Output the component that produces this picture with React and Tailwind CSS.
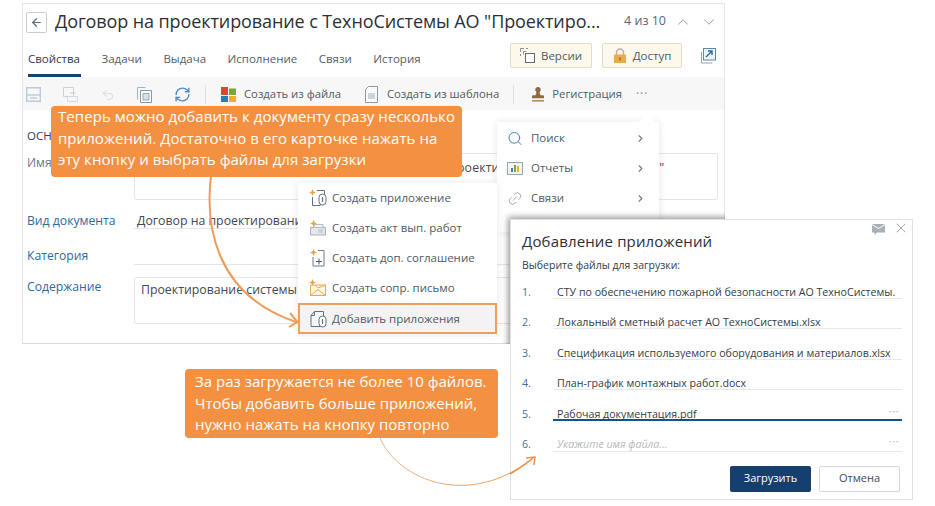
import React from 'react';
import { ArrowLeft, ChevronUp, ChevronDown, ChevronRight, X, Search, Link2, Undo2, RefreshCw } from 'lucide-react';

const Star = ({ x = 0, y = 0 }) => (
  <path d={`M${x + 3.5} ${y}l1 2.500 2.500 1-2.500 1-1 2.500-1-2.500-2.500-1 2.500-1z`} fill="#e8a33d" />
);

const Clip = ({ x = 0, y = 0 }) => (
  <>
    <rect x={x - 1} y={y} width="7" height="11" rx="3.500" fill="#fff" stroke="#5f7183" />
    <path d={`M${x + 2.5} ${y + 3}v5`} stroke="#5f7183" strokeWidth="1.200" />
  </>
);

const MenuIcon = ({ kind }) => (
  <svg width="18" height="18" viewBox="0 0 18 18" fill="none" className="shrink-0">
    {kind === 'app' && (
      <>
        <path d="M3.500 8v8.500h8" stroke="#5f7183" />
        <path d="M8 1.500h7.500v4" stroke="#5f7183" />
        <Clip x={11} y={5} />
        <Star x={0} y={0} />
      </>
    )}
    {kind === 'act' && (
      <>
        <path d="M1.500 8.500h15v7.500h-15z" fill="#e4e8ec" stroke="#a4afba" />
        <path d="M5 5.500h9v3H5z" fill="#f1f3f5" stroke="#b4bdc6" />
        <path d="M9 11h5M9 13h5" stroke="#b4bdc6" />
        <Star x={1} y={1} />
      </>
    )}
    {kind === 'add' && (
      <>
        <path d="M4 8v9h11V1.500H9" fill="#fff" stroke="#6d7f90" />
        <path d="M7 12.500h6M10 9.500v6" stroke="#475a6c" />
        <Star x={1} y={0} />
      </>
    )}
    {kind === 'mail' && (
      <>
        <path d="M1.500 6h15v10.500h-15z" fill="#fff6e3" stroke="#e0aa4e" />
        <path d="M1.500 16.500l7.500-6 7.500 6M6 6l3 3 7.500-3" stroke="#e0aa4e" />
        <Star x={0} y={0} />
      </>
    )}
    {kind === 'attach' && (
      <>
        <path d="M2 5.500L5.500 1.500H14.500V16.500H2z" fill="#f6f7f8" stroke="#5f7183" />
        <path d="M2 5.500h3.500v-4" stroke="#5f7183" />
        <Clip x={11} y={6} />
      </>
    )}
  </svg>
);

const WinIcon = () => (
  <svg width="15" height="15" viewBox="0 0 15 15" className="shrink-0">
    <rect x="0" y="0" width="7" height="8" fill="#d9482b" />
    <rect x="8" y="1.500" width="7" height="6.500" fill="#7aa63c" />
    <rect x="0" y="9" width="7" height="6" fill="#2d78c0" />
    <rect x="8" y="9" width="7" height="6" fill="#eeae2d" />
  </svg>
);

const DocIcon = () => (
  <svg width="13" height="17" viewBox="0 0 13 17" fill="none" className="shrink-0">
    <path d="M.5 3.500L3.500.5h9v16H.5z" fill="#fafafa" stroke="#8d99a5" />
    <path d="M3 8h7M3 10h7M3 12h7" stroke="#a2adb8" />
  </svg>
);

const Stamp = () => (
  <svg width="14" height="15" viewBox="0 0 14 15" className="shrink-0">
    <path d="M7 0a2.600 2.600 0 0 1 2 4.400c-.6 1-.4 2.600.6 3.800H12a1 1 0 0 1 1 1v2H1v-2a1 1 0 0 1 1-1h2.400c1-1.200 1.200-2.800.6-3.800A2.600 2.600 0 0 1 7 0z" fill="#8f6a3c" />
    <rect x="1" y="13" width="12" height="1.600" fill="#b08b58" />
  </svg>
);

const Tab = ({ children, active }) => (
  <div className={`relative h-[31px] pt-[4px] ${active ? 'text-[#2b3a48]' : 'text-[#525e69]'}`}>
    {children}
    {active && <div className="absolute left-0 -right-px bottom-0 h-[3px] bg-[#16446f]" />}
  </div>
);

const PopItem = ({ icon, children }) => (
  <div className="h-[30px] flex items-center gap-[8px] pl-[10px] pr-[13px] text-[#4f5a64]">
    <span className="w-[16px] flex justify-center">{icon}</span>
    <span className="flex-1">{children}</span>
    <ChevronRight size={11} strokeWidth={2.5} className="text-[#6f7b86]" />
  </div>
);

const files = [
  'СТУ по обеспечению пожарной безопасности АО ТехноСистемы.',
  'Локальный сметный расчет АО ТехноСистемы.xlsx',
  'Спецификация используемого оборудования и материалов.xlsx',
  'План-график монтажных работ.docx',
];

export default function App() {
  return (
    <div
      className="relative w-[935px] h-[506px] overflow-hidden bg-white text-[#333d46]"
      style={{ fontFamily: '"Open Sans", "Noto Sans", sans-serif' }}
    >
      {/* карточка документа */}
      <div className="absolute left-[22px] top-[3px] w-[703px] h-[341px] border border-[#e6e6e6] border-b-[#dcdcdc] bg-white">
        <div className="flex items-center h-[33px] mt-[2px] pl-[3px] pr-[6px]">
          <div className="w-[21px] h-[21px] shrink-0 border border-[#c9ced3] rounded-[2px] flex items-center justify-center text-[#5f6b76]">
            <ArrowLeft size={13} strokeWidth={2.2} />
          </div>
          <div className="ml-[8px] -mt-[3px] text-[18px] tracking-[-0.1px] leading-[26px] text-[#2b3036] whitespace-nowrap">
            Договор на проектирование с ТехноСистемы АО "Проектиро...
          </div>
          <div className="ml-auto flex items-center gap-[8px] whitespace-nowrap -mt-[2px]">
            <span className="text-[12.5px] text-[#5b6670]">4 из 10</span>
            <ChevronUp size={18} strokeWidth={1.1} className="text-[#7d8892]" />
            <ChevronDown size={18} strokeWidth={1.1} className="text-[#7d8892]" />
          </div>
        </div>

        <div className="flex items-start h-[38px] pl-[5px] pr-[8px] text-[11.5px]">
          <div className="flex gap-[21.5px] mt-[7px]">
            <Tab active>Свойства</Tab>
            <Tab>Задачи</Tab>
            <Tab>Выдача</Tab>
            <Tab>Исполнение</Tab>
            <Tab>Связи</Tab>
            <Tab>История</Tab>
          </div>
          <div className="ml-auto flex items-center gap-[10px] mt-[4px] text-[11.5px] text-[#4f5a64]">
            <div className="w-[82px] h-[25px] border border-[#e6dcc6] rounded-[2px] bg-[#fdf8ec] flex items-center justify-center gap-[6px]">
              <svg width="15" height="15" viewBox="0 0 15 15" fill="none">
                <path d="M.5 4V.5H4M6 .5h2M.5 6v2" stroke="#8a949d" />
                <path d="M3.500 3.500h3M3.500 3.500v3" stroke="#8a949d" />
                <rect x="5.500" y="5.500" width="9" height="9" fill="#fff" stroke="#5f6b76" />
              </svg>
              Версии
            </div>
            <div className="w-[80px] h-[25px] border border-[#e6dcc6] rounded-[2px] bg-[#fdf8ec] flex items-center justify-center gap-[6px]">
              <svg width="14" height="15" viewBox="0 0 14 15" fill="none">
                <path d="M3.500 7V4.500a3.500 3.500 0 0 1 7 0V7" stroke="#b9b1a0" strokeWidth="1.500" />
                <rect x="1" y="6.500" width="12" height="8.500" fill="#e9ad4d" />
                <rect x="6" y="9.500" width="2" height="3" fill="#a87a2a" />
              </svg>
              Доступ
            </div>
            <svg width="15" height="16" viewBox="0 0 15 16" fill="none" className="ml-[9px]">
              <rect x="2.500" y=".5" width="12" height="11.500" fill="#eef4fa" stroke="#5f86ad" />
              <path d="M.5 4v11h11" stroke="#8aa5bf" />
              <path d="M5 9l6-6M7 3h4v4" stroke="#2c6ba8" strokeWidth="1.400" />
            </svg>
          </div>
        </div>

        <div className="flex items-center h-[33px] pl-[3px] pt-[2px] bg-[#f7f7f7] text-[11.3px] text-[#4f5a64] whitespace-nowrap">
          <div className="flex items-center w-[190px] gap-[22px] opacity-90">
            <svg width="15" height="15" viewBox="0 0 15 15" fill="none" className="shrink-0">
              <path d="M.7.7h13.600v13.600H.7z" stroke="#b4c7d9" strokeWidth="1.400" />
              <path d="M1 8h13" stroke="#b4c7d9" strokeWidth="1.400" />
              <path d="M4 11h7" stroke="#c7d6e3" strokeWidth="2" />
            </svg>
            <svg width="16" height="15" viewBox="0 0 16 15" fill="none" className="shrink-0">
              <path d="M.5.5h10v9H.5z" stroke="#c1cfdc" />
              <path d="M4.500 9.500h10v5h-10z" stroke="#cfd9e2" />
              <path d="M7 6h6" stroke="#bcd6a5" />
            </svg>
            <Undo2 size={14} strokeWidth={1.500} className="text-[#ccd2d8] shrink-0" />
            <svg width="15" height="16" viewBox="0 0 15 16" fill="none" className="shrink-0">
              <path d="M.5 12.500V.5h8" stroke="#9aa8b5" />
              <path d="M3.500 3.500h11v12h-11z" fill="#fff" stroke="#7e8d9b" />
              <path d="M6 6.500h6v6.500H6z" fill="#d4dde5" stroke="#8fa0af" />
            </svg>
            <RefreshCw size={17} strokeWidth={2} className="text-[#3f82c0] shrink-0" />
          </div>
          <div className="w-px h-[19px] bg-[#e0e0e0] ml-[-11px] mr-[15px]" />
          <div className="flex items-center gap-[8px]">
            <WinIcon />
            <span>Создать из файла</span>
          </div>
          <div className="flex items-center gap-[9px] ml-[24px]">
            <DocIcon />
            <span>Создать из шаблона</span>
          </div>
          <div className="w-px h-[19px] bg-[#e0e0e0] ml-[14px] mr-[17px]" />
          <div className="flex items-center gap-[7px]">
            <Stamp />
            <span>Регистрация</span>
          </div>
          <span className="ml-[14px] -mt-[1px] text-[12px] tracking-[1px] text-[#7d8892]">···</span>
        </div>

        <div className="pl-[4px] pr-[6px] text-[12.3px]">
          <div className="mt-[17px] h-[16px] text-[11.5px] text-[#333d46]">ОСНОВНОЕ</div>
          <div className="flex mt-[10px]">
            <div className="w-[107px] pt-[1px] text-[12px] text-[#6b7680]">Имя</div>
            <div className="flex-1 h-[47px] border border-[#e4e7ea] rounded-[2px] px-[6px] pt-[5px] tracking-[0.13px] whitespace-nowrap overflow-hidden text-[#3f4953]">
              Договор на проектирование с ТехноСистемы АО "Проектирование систем АО Район"
            </div>
          </div>
          <div className="flex h-[22px] mt-[7px]">
            <div className="w-[107px] text-[12.2px] text-[#2d6a9f] pt-[5px]">Вид документа</div>
            <div className="flex-1 border-b border-[#e4e7ea] pl-[3px] pt-[5px] text-[#3f4953] whitespace-nowrap">Договор на проектирование</div>
          </div>
          <div className="flex h-[36px]">
            <div className="w-[107px] text-[12.2px] text-[#2d6a9f] pt-[18px]">Категория</div>
            <div className="flex-1 border-b border-[#e4e7ea]" />
          </div>
          <div className="flex mt-[12px]">
            <div className="w-[107px] text-[12.2px] text-[#2d6a9f] pt-[1px]">Содержание</div>
            <div className="flex-1 h-[47px] border border-[#e4e7ea] rounded-[2px] px-[6px] pt-[3px] text-[#3f4953]">
              Проектирование системы пожарной безопасности
            </div>
          </div>
        </div>
      </div>

      {/* меню "..." */}
      <div className="absolute left-[497px] top-[122px] w-[162px] h-[110px] bg-white shadow-[0_0_8px_rgba(0,0,0,0.1)] text-[11.5px] pt-[1px]">
        <div className="absolute left-[144px] -top-[6px] w-[12px] h-[12px] rotate-45 bg-white" />
        <PopItem icon={<Search size={17} strokeWidth={1.500} className="text-[#3f7fb5]" />}>Поиск</PopItem>
        <PopItem
          icon={
            <svg width="16" height="13" viewBox="0 0 16 13" fill="none">
              <rect x=".5" y=".5" width="15" height="12" fill="#f4f4f4" stroke="#9aa4ad" />
              <rect x="4" y="6" width="2" height="4" fill="#3f82c0" />
              <rect x="7" y="3" width="2" height="7" fill="#7aa63c" />
              <rect x="10" y="4" width="2" height="6" fill="#eeae2d" />
            </svg>
          }
        >
          Отчеты
        </PopItem>
        <PopItem icon={<Link2 size={19} strokeWidth={1.300} className="text-[#98a1a9] -rotate-45" />}>Связи</PopItem>
      </div>

      {/* подменю */}
      <div className="absolute left-[298px] top-[183px] w-[199px] bg-white shadow-[0_0_8px_rgba(0,0,0,0.1)] text-[11.5px] text-[#4f5a64]">
        {[
          ['app', 'Создать приложение'],
          ['act', 'Создать акт вып. работ'],
          ['add', 'Создать доп. соглашение'],
          ['mail', 'Создать сопр. письмо'],
        ].map(([kind, label]) => (
          <div key={kind} className="h-[30px] flex items-center gap-[5px] pl-[11px]">
            <MenuIcon kind={kind} />
            {label}
          </div>
        ))}
        <div className="h-[31px] flex items-center gap-[5px] pl-[9px] bg-[#f3f3f3] border-2 border-[#eda05c]">
          <MenuIcon kind="attach" />
          Добавить приложения
        </div>
      </div>

      {/* тень диалога видна только поверх карточки */}
      <div className="absolute left-[22px] top-[3px] w-[703px] h-[341px] overflow-hidden">
        <div className="absolute left-[488px] top-[216px] w-[403px] h-[281px] shadow-[-2px_-2px_6px_rgba(0,0,0,0.4)]" />
      </div>

      {/* диалог */}
      <div className="absolute left-[510px] top-[219px] w-[403px] h-[281px] bg-white border border-[#e0e0e0]">
        <div className="absolute right-[3px] top-0 flex items-center gap-[8px]">
          <svg width="13" height="11" viewBox="0 0 13 11" className="mt-[3px]">
            <path d="M0 0h13v8.500H5L2.500 11V8.500H0z" fill="#a9b0b6" />
            <path d="M0 .5l6.500 4 6.500-4" stroke="#fff" fill="none" />
          </svg>
          <X size={16} strokeWidth={1.100} className="text-[#7d8892]" />
        </div>
        <div className="pl-[11px] pt-[10px] text-[15px] leading-[22px] tracking-[0.15px] text-[#2b3036]">Добавление приложений</div>
        <div className="pl-[11px] mt-[6px] text-[10.5px] leading-[14px] text-[#333d46]">Выберите файлы для загрузки:</div>
        <div className="-mt-[4px] text-[10.65px]">
          {files.map((name, i) => (
            <div key={name} className="flex h-[30.6px] pl-[11px]">
              <span className="w-[31px] pt-[16.5px] leading-[14px] text-[#3b719f]">{i + 1}.</span>
              <div className="w-[349px] pl-[4px] pt-[16.5px] leading-[14px] border-b border-[#e8e8e8] whitespace-nowrap overflow-hidden">{name}</div>
            </div>
          ))}
          <div className="flex h-[30.6px] pl-[11px]">
            <span className="w-[31px] pt-[16.5px] leading-[14px] text-[#3b719f]">5.</span>
            <div className="w-[349px] pl-[4px] pt-[16.5px] leading-[14px] border-b-2 border-[#16528c] flex justify-between pr-[3px]">
              Рабочая документация.pdf
              <span className="text-[#a9b0b6] tracking-[0.5px] -mt-[3px]">···</span>
            </div>
          </div>
          <div className="flex h-[30.6px] pl-[11px]">
            <span className="w-[31px] pt-[16.5px] leading-[14px] text-[#3b719f]">6.</span>
            <div className="w-[349px] pl-[4px] pt-[16.5px] leading-[14px] border-b border-[#e8e8e8] flex justify-between pr-[3px]">
              <span className="italic text-[#b5b9bd]">Укажите имя файла...</span>
              <span className="text-[#a9b0b6] tracking-[0.5px] -mt-[3px]">···</span>
            </div>
          </div>
        </div>
        <div className="flex justify-end gap-[8px] pr-[12px] mt-[14px] text-[11px]">
          <div className="w-[81px] h-[26px] rounded-[2px] bg-[#143f6e] text-white flex items-center justify-center">Загрузить</div>
          <div className="w-[81px] h-[26px] rounded-[2px] border border-[#d5d8db] text-[#3f4953] flex items-center justify-center">Отмена</div>
        </div>
      </div>

      {/* стрелки */}
      <svg width="935" height="506" viewBox="0 0 935 506" fill="none" className="absolute left-0 top-0 pointer-events-none">
        <defs>
          <linearGradient id="taper" x1="380" y1="0" x2="535" y2="0" gradientUnits="userSpaceOnUse">
            <stop offset="0" stopColor="#e9b68c" />
            <stop offset="1" stopColor="#f0924a" />
          </linearGradient>
        </defs>
        <path d="M211 176C205 225 215 295 296 322" stroke="#ef9c5a" strokeWidth="2" />
        <path d="M290 313L297.500 322L289 327" stroke="#ef9c5a" strokeWidth="2" />
        <path d="M380 438C398 480 470 510 534 457" stroke="url(#taper)" strokeWidth="1" />
        <path d="M510 474C520 468 528 463 534 457" stroke="#f0924a" strokeWidth="1.500" />
        <path d="M526 458L535 457L534 465" stroke="#f0924a" strokeWidth="1.500" />
      </svg>

      {/* подсказки */}
      <div className="absolute left-[51px] top-[106px] w-[411px] h-[71px] rounded-[4px] bg-[#f39041] text-white text-[15px] leading-[21.500px] pl-[7px] tracking-[0.06px] whitespace-nowrap">
        Теперь можно добавить к документу сразу несколько<br />
        приложений. Достаточно в его карточке нажать на<br />
        эту кнопку и выбрать файлы для загрузки
      </div>
      <div className="absolute left-[185px] top-[369px] w-[313px] h-[69px] rounded-[4px] bg-[#f39041] text-white text-[15px] leading-[21.500px] pl-[10px] pt-[2px] whitespace-nowrap">
        За раз загружается не более 10 файлов.<br />
        Чтобы добавить больше приложений,<br />
        нужно нажать на кнопку повторно
      </div>
    </div>
  );
}
